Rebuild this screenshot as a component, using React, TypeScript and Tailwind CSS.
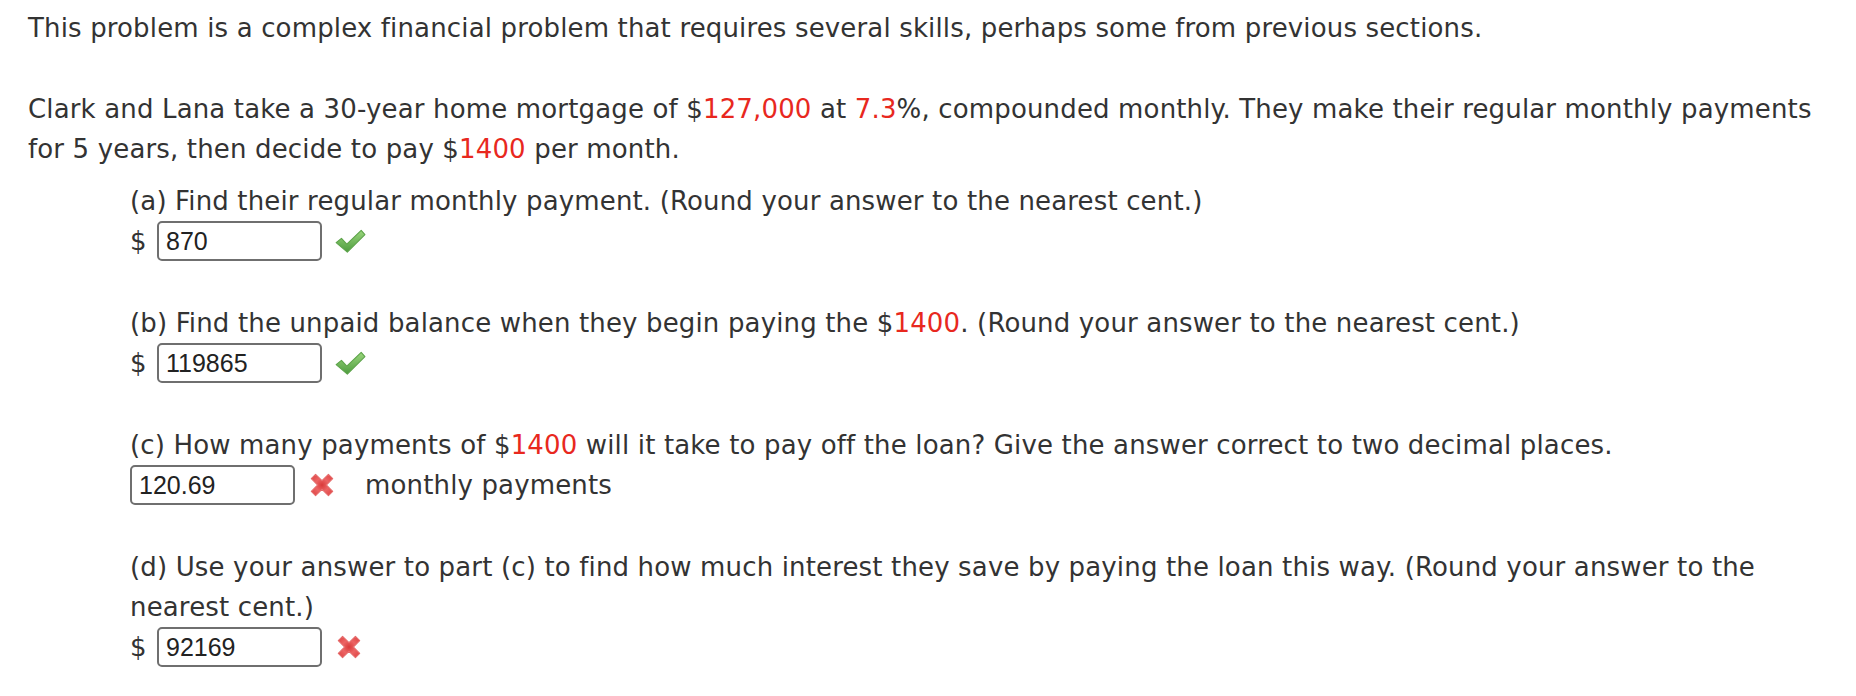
import React from 'react'

const red = 'text-[#e8281e]'

function Check() {
  return (
    <svg width="32" height="28" viewBox="0 0 30 26" className="shrink-0">
      <defs>
        <linearGradient id="ck" x1="0" y1="0" x2="0" y2="1">
          <stop offset="0" stopColor="#9ad67c" />
          <stop offset="1" stopColor="#4e9c3f" />
        </linearGradient>
      </defs>
      <path d="M2 14.5 L7 10.5 L12 16 L25.5 3 L29 7 L12.5 23.5 Z" fill="url(#ck)" stroke="#5da34a" strokeWidth="1" strokeLinejoin="round" />
    </svg>
  )
}

function Cross() {
  return (
    <svg width="30" height="30" viewBox="0 0 28 28" className="shrink-0">
      <defs>
        <radialGradient id="cx" cx="0.5" cy="0.5" r="0.6">
          <stop offset="0" stopColor="#d93a3a" />
          <stop offset="0.5" stopColor="#ec6464" />
          <stop offset="1" stopColor="#e04848" />
        </radialGradient>
      </defs>
      <path d="M4 8 L8 4 L14 10 L20 4 L24 8 L18 14 L24 20 L20 24 L14 18 L8 24 L4 20 L10 14 Z" fill="url(#cx)" stroke="#e56a6a" strokeWidth="1" strokeLinejoin="round" />
    </svg>
  )
}

function Box({ value }: { value: string }) {
  return (
    <div className="w-[165px] h-[40px] border-2 border-[#6f6f6f] rounded-[5px] bg-white flex items-center pl-[7px] text-[25px] leading-none tracking-normal text-[#222] shrink-0" style={{ fontFamily: '"Liberation Sans", Arial, sans-serif' }}>
      {value}
    </div>
  )
}

function Part({ q, children }: { q: React.ReactNode; children: React.ReactNode }) {
  return (
    <div className="mb-[42px]">
      <div>{q}</div>
      <div className="flex items-center h-[40px]">{children}</div>
    </div>
  )
}

export default function App() {
  return (
    <div className="bg-white w-[1856px] h-[696px] pl-[28px] pr-[16px] pt-[8px] text-[26px] leading-[40px] tracking-[0.15px] text-[#333]" style={{ fontFamily: '"DejaVu Sans", Verdana, sans-serif' }}>
      <p>This problem is a complex financial problem that requires several skills, perhaps some from previous sections.</p>
      <p className="mt-[41px]">
        Clark and Lana take a 30-year home mortgage of $<span className={red}>127,000</span> at <span className={red}>7.3</span>%, compounded monthly. They make their regular monthly payments for 5 years, then decide to pay $<span className={red}>1400</span> per month.
      </p>
      <div className="pl-[102px] mt-[12px]">
        <Part q="(a) Find their regular monthly payment. (Round your answer to the nearest cent.)">
          <span className="w-[27px]">$</span>
          <Box value="870" />
          <span className="ml-[12px]"><Check /></span>
        </Part>
        <Part q={<>(b) Find the unpaid balance when they begin paying the $<span className={red}>1400</span>. (Round your answer to the nearest cent.)</>}>
          <span className="w-[27px]">$</span>
          <Box value="119865" />
          <span className="ml-[12px]"><Check /></span>
        </Part>
        <Part q={<>(c) How many payments of $<span className={red}>1400</span> will it take to pay off the loan? Give the answer correct to two decimal places.</>}>
          <Box value="120.69" />
          <span className="ml-[12px]"><Cross /></span>
          <span className="ml-[28px]">monthly payments</span>
        </Part>
        <Part q="(d) Use your answer to part (c) to find how much interest they save by paying the loan this way. (Round your answer to the nearest cent.)">
          <span className="w-[27px]">$</span>
          <Box value="92169" />
          <span className="ml-[12px]"><Cross /></span>
        </Part>
      </div>
    </div>
  )
}
